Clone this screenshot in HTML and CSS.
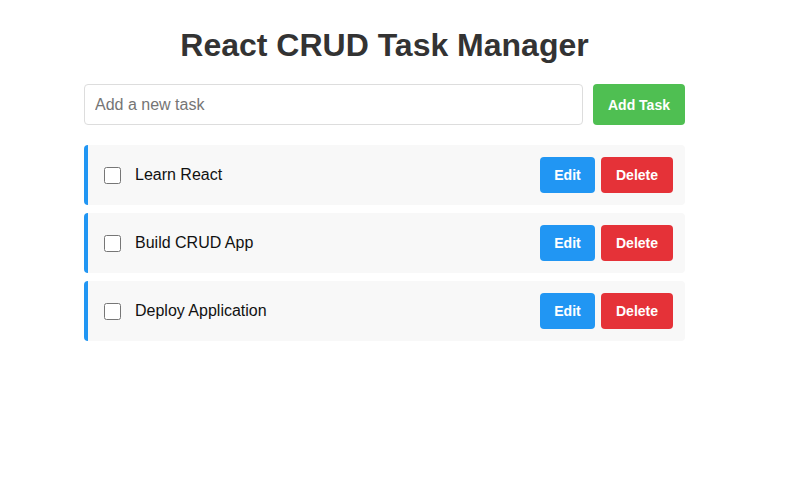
FILE: index.html
```html
<!DOCTYPE html>
<html lang="en">
<head>
<meta charset="utf-8">
<title>React CRUD Task Manager</title>
<link rel="stylesheet" href="styles.css">
</head>
<body>
<div class="app">
  <h1 class="title">React CRUD Task Manager</h1>
  <div class="add-row">
    <input class="task-input" type="text" placeholder="Add a new task">
    <button class="btn btn-add">Add Task</button>
  </div>
  <ul class="task-list">
    <li class="task">
      <input class="task-check" type="checkbox">
      <span class="task-text">Learn React</span>
      <div class="actions">
        <button class="btn btn-edit">Edit</button>
        <button class="btn btn-delete">Delete</button>
      </div>
    </li>
    <li class="task">
      <input class="task-check" type="checkbox">
      <span class="task-text">Build CRUD App</span>
      <div class="actions">
        <button class="btn btn-edit">Edit</button>
        <button class="btn btn-delete">Delete</button>
      </div>
    </li>
    <li class="task">
      <input class="task-check" type="checkbox">
      <span class="task-text">Deploy Application</span>
      <div class="actions">
        <button class="btn btn-edit">Edit</button>
        <button class="btn btn-delete">Delete</button>
      </div>
    </li>
  </ul>
</div>
</body>
</html>
```
FILE: styles.css
```css
* { box-sizing: border-box; }
html, body { margin: 0; padding: 0; background: #ffffff; }
body {
  font-family: "Liberation Sans", Arial, sans-serif;
  color: #111;
}
.app {
  width: 601px;
  margin-left: 84px;
  padding-top: 26px;
}
.title {
  margin: 0 0 20px;
  text-align: center;
  font-size: 32px;
  font-weight: bold;
  color: #333;
  line-height: 38px;
}
.add-row {
  display: flex;
  gap: 10px;
  margin-bottom: 20px;
}
.task-input {
  flex: 1;
  height: 41px;
  border: 1px solid #ddd;
  border-radius: 4px;
  padding: 0 10px;
  font-family: inherit;
  font-size: 16px;
  color: #333;
  outline: none;
}
.task-input::placeholder { color: #757575; }
.btn {
  border: none;
  border-radius: 4px;
  color: #fff;
  font-family: inherit;
  font-size: 14px;
  font-weight: bold;
  cursor: pointer;
}
.btn-add {
  width: 92px;
  height: 41px;
  background: #4fbf52;
}
.task-list {
  list-style: none;
  margin: 0;
  padding: 0;
  display: flex;
  flex-direction: column;
  gap: 8px;
}
.task {
  display: flex;
  align-items: center;
  height: 60px;
  padding: 0 12px;
  background: #f8f8f8;
  border-left: 4px solid #2196f3;
  border-radius: 4px;
}
.task-check {
  width: 17px;
  height: 17px;
  margin: 0 0 0 4px;
}
.task-text {
  margin-left: 14px;
  font-size: 16px;
  color: #111;
  flex: 1;
}
.actions {
  display: flex;
  gap: 6px;
}
.btn-edit {
  width: 55px;
  height: 36px;
  background: #2196f3;
}
.btn-delete {
  width: 72px;
  height: 36px;
  background: #e53238;
}
```
